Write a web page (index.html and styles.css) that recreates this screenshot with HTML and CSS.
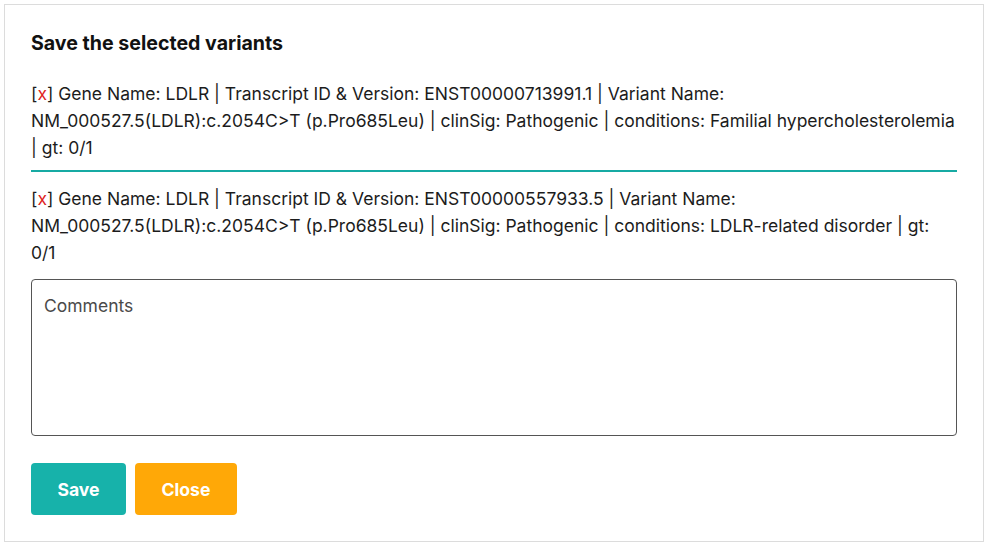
FILE: index.html
```html
<!DOCTYPE html>
<html>
<head>
<meta charset="utf-8">
<link rel="stylesheet" href="styles.css">
</head>
<body>
<div class="dialog">
  <h2 class="title">Save the selected variants</h2>
  <div class="entries">
    <div class="entry">[<span class="x">x</span>] Gene Name: LDLR | Transcript ID &amp; Version: ENST00000713991.1 | Variant Name: NM_000527.5(LDLR):c.2054C&gt;T (p.Pro685Leu) | clinSig: Pathogenic | conditions: Familial hypercholesterolemia | gt: 0/1</div>
    <div class="entry">[<span class="x">x</span>] Gene Name: LDLR | Transcript ID &amp; Version: ENST00000557933.5 | Variant Name: NM_000527.5(LDLR):c.2054C&gt;T (p.Pro685Leu) | clinSig: Pathogenic | conditions: LDLR-related disorder | gt: 0/1</div>
  </div>
  <textarea class="comments" placeholder="Comments"></textarea>
  <div class="actions">
    <button class="btn save">Save</button>
    <button class="btn close">Close</button>
  </div>
</div>
</body>
</html>
```
FILE: styles.css
```css
html, body {
  margin: 0;
  padding: 0;
  background: #fff;
}
body {
  padding: 4px;
  font-family: Inter, "Noto Sans", sans-serif;
  color: #1a1a1a;
}
.dialog {
  border: 1px solid #dcdcdc;
  height: 538px;
  box-sizing: border-box;
  padding: 25px 26px 0 26px;
  display: flex;
  flex-direction: column;
}
.title {
  margin: 0;
  font-size: 19.6px;
  font-weight: 700;
  line-height: 27px;
  color: #111;
}
.entries {
  margin-top: 23px;
  display: flex;
  flex-direction: column;
}
.entry {
  font-size: 17.5px;
  line-height: 27px;
  color: #1c1c1c;
}
.entry + .entry {
  border-top: 2px solid #17aaa3;
  margin-top: 9px;
  padding-top: 13px;
}
.x {
  color: #e01e1e;
}
.comments {
  margin-top: 13px;
  height: 157px;
  box-sizing: border-box;
  border: 1px solid #555;
  border-radius: 4px;
  padding: 13px 12px;
  font-family: Inter, "Noto Sans", sans-serif;
  font-size: 17.5px;
  line-height: 26px;
  resize: none;
  outline: none;
}
.comments::placeholder {
  color: #4a4a4a;
}
.actions {
  margin-top: 27px;
  display: flex;
  gap: 9px;
}
.btn {
  height: 52px;
  border: none;
  border-radius: 4px;
  color: #fff;
  font-family: Inter, "Noto Sans", sans-serif;
  font-size: 17.6px;
  font-weight: 700;
  cursor: pointer;
}
.save {
  width: 95px;
  background: #17b2aa;
}
.close {
  width: 102px;
  background: #ffa807;
}
```
